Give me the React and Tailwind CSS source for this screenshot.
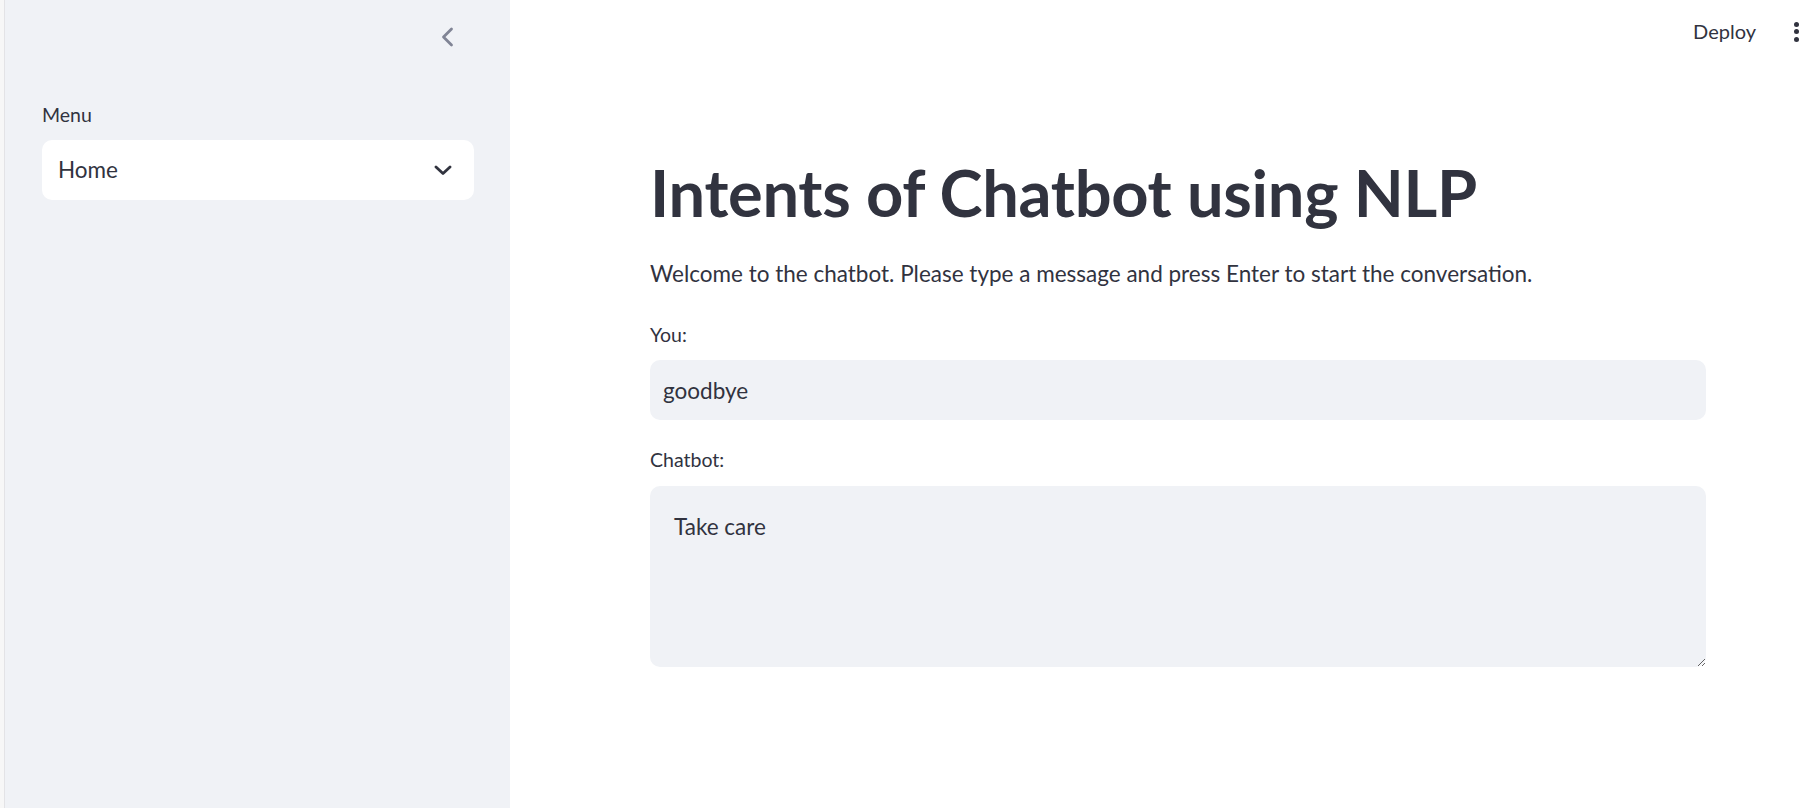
/* ── Sidebar ─────────────────────────────────────────────────── */
const Sidebar = () => (
  <aside className="flex h-full shrink-0">
    <div className="w-[5px] bg-[#f7f7f7] border-r border-[#e3e3e6]" />
    <div className="w-[505px] bg-[#f0f2f6] flex flex-col">
      {/* Collapse button */}
      <div className="flex justify-end pr-[56px] pt-[27px] h-[103px]">
        <svg width="14" height="20" viewBox="0 0 14 20" fill="none">
          <polyline
            points="11.5,2 3.5,10 11.5,18"
            stroke="#808495"
            strokeWidth="2.8"
            strokeLinecap="round"
            strokeLinejoin="round"
          />
        </svg>
      </div>

      {/* Menu select */}
      <div className="pl-[37px] pr-[36px]">
        <p className="text-[19.5px] leading-[24px] text-[#31333f] mb-[13px]">Menu</p>
        <div className="h-[60px] rounded-[10px] bg-white flex items-center justify-between pl-[16px] pr-[22px]">
          <span className="text-[22.5px] text-[#31333f]">Home</span>
          <svg width="18" height="10" viewBox="0 0 18 10" fill="none">
            <polyline
              points="2,2 9,8.5 16,2"
              stroke="#31333f"
              strokeWidth="2.8"
              strokeLinecap="round"
              strokeLinejoin="round"
            />
          </svg>
        </div>
      </div>
    </div>
  </aside>
);

/* ── Main ────────────────────────────────────────────────────── */
export default function App() {
  return (
    <div
      className="flex w-[1813px] h-[808px] bg-white text-[#31333f] overflow-hidden"
      style={{ fontFamily: "Lato, 'Noto Sans', sans-serif" }}
    >
      <Sidebar />
      <main className="flex-1 flex flex-col">
        {/* Header */}
        <div className="h-[64px] flex items-start justify-end pt-[18px] pr-[14px]">
          <span className="text-[20px] leading-[26px] mr-[38px]">Deploy</span>
          <div className="flex flex-col gap-[2.5px] pt-[3.5px]">
            <span className="w-[5px] h-[5px] rounded-full bg-[#31333f]" />
            <span className="w-[5px] h-[5px] rounded-full bg-[#31333f]" />
            <span className="w-[5px] h-[5px] rounded-full bg-[#31333f]" />
          </div>
        </div>

        {/* Content */}
        <div className="pl-[140px] w-[1196px] flex flex-col">
          <h1 className="mt-[88px] text-[65px] leading-[80px] font-bold tracking-[-0.3px]">
            Intents of Chatbot using NLP
          </h1>
          <p className="mt-[27px] text-[22.5px] leading-[30px]">
            Welcome to the chatbot. Please type a message and press Enter to start the conversation.
          </p>

          <label className="mt-[34px] text-[19.5px] leading-[24px]">You:</label>
          <input
            readOnly
            value="goodbye"
            className="mt-[13px] h-[60px] rounded-[10px] bg-[#f0f2f6] px-[13px] text-[22.5px] outline-none"
          />

          <label className="mt-[28px] text-[19.5px] leading-[24px]">Chatbot:</label>
          <textarea
            readOnly
            value="Take care"
            className="mt-[14px] h-[181px] rounded-[10px] bg-[#f0f2f6] px-[24px] pt-[25px] text-[22.5px] leading-[32px] outline-none resize-y"
          />
        </div>
      </main>
    </div>
  );
}
